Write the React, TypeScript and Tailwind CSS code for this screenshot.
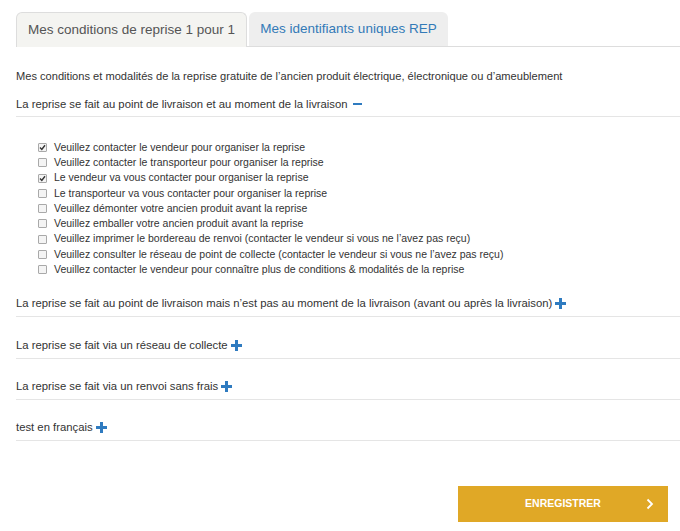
import React from "react";

const options = [
  { label: "Veuillez contacter le vendeur pour organiser la reprise", checked: true },
  { label: "Veuillez contacter le transporteur pour organiser la reprise", checked: false },
  { label: "Le vendeur va vous contacter pour organiser la reprise", checked: true },
  { label: "Le transporteur va vous contacter pour organiser la reprise", checked: false },
  { label: "Veuillez démonter votre ancien produit avant la reprise", checked: false },
  { label: "Veuillez emballer votre ancien produit avant la reprise", checked: false },
  { label: "Veuillez imprimer le bordereau de renvoi (contacter le vendeur si vous ne l’avez pas reçu)", checked: false },
  { label: "Veuillez consulter le réseau de point de collecte (contacter le vendeur si vous ne l’avez pas reçu)", checked: false },
  { label: "Veuillez contacter le vendeur pour connaître plus de conditions & modalités de la reprise", checked: false },
];

const closedSections = [
  "La reprise se fait au point de livraison mais n’est pas au moment de la livraison (avant ou après la livraison)",
  "La reprise se fait via un réseau de collecte",
  "La reprise se fait via un renvoi sans frais",
  "test en français",
];

const Plus = () => (
  <svg width="11" height="11" viewBox="0 0 11 11" className="ml-[3px] inline-block mb-[1px]">
    <rect x="4" y="0" width="3" height="11" fill="#2f7bc0" />
    <rect x="0" y="4" width="11" height="3" fill="#2f7bc0" />
  </svg>
);

const Check = ({ checked }: { checked: boolean }) => (
  <span className="w-[9px] h-[9px] border border-[#a9a9a9] bg-[#f4f4f4] rounded-[1px] flex items-center justify-center shrink-0">
    {checked && (
      <svg width="7" height="7" viewBox="0 0 7 7">
        <path d="M1 3.6 L2.8 5.4 L6 1.3" stroke="#333" strokeWidth="1.4" fill="none" />
      </svg>
    )}
  </span>
);

export default function App() {
  return (
    <div className="w-[680px] h-[531px] bg-white text-[#333] font-['Liberation_Sans',Arial,sans-serif] overflow-hidden">
      {/* Tabs */}
      <div className="flex items-end pt-[12px] pl-[16px]">
        <div className="w-[231px] h-[35px] bg-[#f4f4f1] border border-[#dddddd] border-b-0 rounded-t-[6px] flex items-center justify-center text-[13.5px] text-[#555]">
          Mes conditions de reprise 1 pour 1
        </div>
        <div className="flex-1 flex items-end border-b border-[#dddddd]">
          <div className="ml-[2px] w-[199px] h-[34px] bg-[#eeeeee] rounded-t-[6px] flex items-center justify-center text-[13.5px] text-[#337ab7]">
            Mes identifiants uniques REP
          </div>
        </div>
      </div>

      <div className="pl-[16px]">
        <p className="mt-[22px] text-[11.1px] leading-[14px]">
          Mes conditions et modalités de la reprise gratuite de l’ancien produit électrique, électronique ou d’ameublement
        </p>

        {/* Open section */}
        <div className="mt-[14px] border-b border-[#e5e5e5] pb-[5px] flex items-center text-[11.3px] leading-[14px]">
          <span>La reprise se fait au point de livraison et au moment de la livraison</span>
          <span className="ml-[5px] w-[9px] h-[2px] bg-[#2f7bc0] inline-block" />
        </div>

        <div className="pl-[22px] pt-[23px] flex flex-col">
          {options.map((o) => (
            <label key={o.label} className="flex items-center gap-[7px] h-[15.25px] text-[10.5px]">
              <Check checked={o.checked} />
              <span>{o.label}</span>
            </label>
          ))}
        </div>

        <div className="pt-[7px] flex flex-col">
          {closedSections.map((s) => (
            <div key={s} className="border-b border-[#e5e5e5] h-[41.3px] flex items-end pb-[6px] text-[11.3px] leading-[14px] first:h-[33px]">
              <span>{s}</span>
              <Plus />
            </div>
          ))}
        </div>
      </div>

      <div className="flex justify-end pr-[12px] mt-[45px]">
        <button className="w-[210px] h-[36px] bg-[#e0a826] text-white font-bold text-[10.5px] flex items-center relative">
          <span className="flex-1 text-center">ENREGISTRER</span>
          <svg width="8" height="12" viewBox="0 0 8 12" className="absolute right-[14px]">
            <path d="M1.5 1.5 L6 6 L1.5 10.5" stroke="white" strokeWidth="1.8" fill="none" />
          </svg>
        </button>
      </div>
    </div>
  );
}
